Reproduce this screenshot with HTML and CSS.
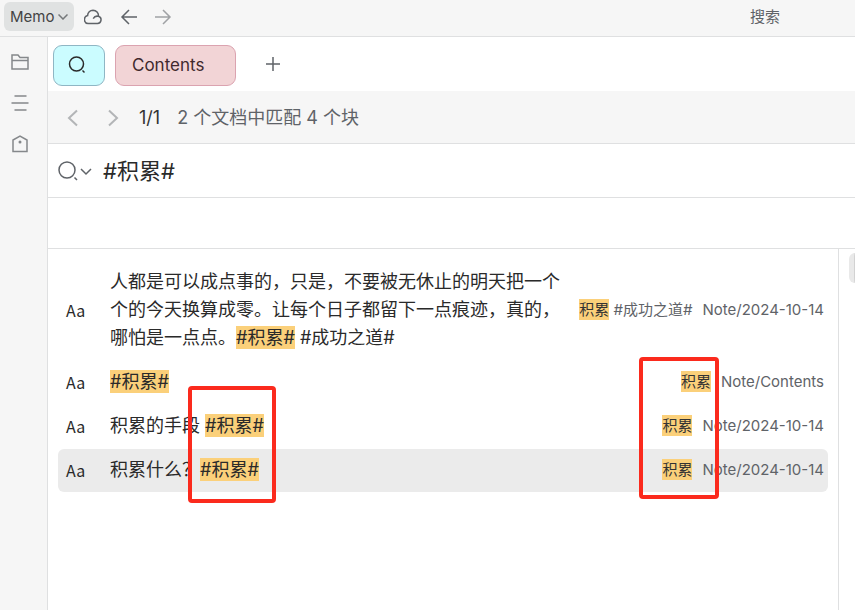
FILE: index.html
```html
<!DOCTYPE html>
<html lang="zh-CN">
<head>
    <meta charset="UTF-8">
    <meta name="viewport" content="width=device-width, initial-scale=1.0">
    <title>搜索</title>
    <link rel="stylesheet" href="styles.css">
</head>
<body>
    <header class="toolbar">
      <button class="workspace" type="button">Memo
        <svg width="10" height="6" viewBox="0 0 10 6"><path d="M.5.5L5 5 9.500.5"/></svg>
      </button>
      <button class="icon_btn cloud" type="button" aria-label="Sync">
        <svg width="18" height="16" viewBox="0 0 18 16"><path d="M4.200 14.500h9.300a3.700 3.700 0 0 0 1-7.200A5.600 5.600 0 0 0 9 1.200 5.500 5.500 0 0 0 3.600 6.600a4 4 0 0 0 .6 7.900z"/><path d="M14.400 7.300c-2-.5-4 .2-5.200 2.300"/></svg>
      </button>
      <button class="icon_btn back" type="button" aria-label="Back">
        <svg width="18" height="16" viewBox="0 0 18 16"><path d="M17 8H2M9 1L2 8l7 7"/></svg>
      </button>
      <button class="icon_btn forward" type="button" aria-label="Forward">
        <svg width="18" height="16" viewBox="0 0 18 16"><path d="M1 8h15M9 1l7 7-7 7"/></svg>
      </button>
      <span class="window_title">搜索</span>
    </header>
    <div class="layout">
      <nav class="dock">
        <button class="icon_btn" type="button" aria-label="Files">
          <svg width="18" height="18" viewBox="0 0 18 18"><path d="M1 16V2h6l2 2.500h8V16zM1 7.500h16"/></svg>
        </button>
        <button class="icon_btn" type="button" aria-label="Outline">
          <svg width="18" height="18" viewBox="0 0 18 18"><path d="M3.500 2h12M.5 9h17M3.500 16h12"/></svg>
        </button>
        <button class="icon_btn" type="button" aria-label="Tags">
          <svg width="18" height="18" viewBox="0 0 18 18"><path d="M2 16.500V5L9 1l7 4v11.500z"/><circle class="dot" cx="9" cy="7" r="1.500"/></svg>
        </button>
      </nav>
      <main class="content">
        <div class="tabs">
          <button class="tab tab_search" type="button" aria-label="搜索">
            <svg width="20" height="20" viewBox="0 0 20 20"><circle cx="9.500" cy="9" r="7"/><path d="M15.500 15.500l2 2"/></svg>
          </button>
          <button class="tab tab_doc" type="button">Contents</button>
          <button class="icon_btn add" type="button" aria-label="New tab">
            <svg width="16" height="16" viewBox="0 0 16 16"><path d="M8 1v14M1 8h14"/></svg>
          </button>
        </div>
        <div class="status">
          <button class="icon_btn pager" type="button" aria-label="Previous">
            <svg width="12" height="18" viewBox="0 0 12 18"><path d="M10 1.500L2 9l8 7.500"/></svg>
          </button>
          <button class="icon_btn pager" type="button" aria-label="Next">
            <svg width="12" height="18" viewBox="0 0 12 18"><path d="M2 1.500L10 9l-8 7.500"/></svg>
          </button>
          <span class="page">1/1</span>
          <span class="count">2 个文档中匹配 4 个块</span>
        </div>
        <div class="search">
          <button class="icon_btn search_menu" type="button" aria-label="History">
            <svg width="34" height="20" viewBox="0 0 34 20"><circle cx="9" cy="9" r="8"/><path d="M16.500 16.500l2.500 2.500M23 8l5 5 5-5"/></svg>
          </button>
          <input class="query" type="text" value="#积累#" aria-label="搜索">
        </div>
        <div class="filters"></div>
        <div class="panes">
          <section class="results">
            <ul class="list">
              <li class="item">
                <span class="type">Aa</span>
                <span class="text">人都是可以成点事的，只是，不要被无休止的明天把一个个的今天换算成零。让每个日子都留下一点痕迹，真的，哪怕是一点点。<mark>#积累#</mark> #成功之道#</span>
                <span class="meta"><span><mark>积累</mark> #成功之道#</span><span>Note/2024-10-14</span></span>
              </li>
              <li class="item">
                <span class="type">Aa</span>
                <span class="text"><mark>#积累#</mark></span>
                <span class="meta"><span><mark>积累</mark></span><span>Note/Contents</span></span>
              </li>
              <li class="item">
                <span class="type">Aa</span>
                <span class="text">积累的手段 <mark>#积累#</mark></span>
                <span class="meta"><span><mark>积累</mark></span><span>Note/2024-10-14</span></span>
              </li>
              <li class="item focus">
                <span class="type">Aa</span>
                <span class="text">积累什么？<mark>#积累#</mark></span>
                <span class="meta"><span><mark>积累</mark></span><span>Note/2024-10-14</span></span>
              </li>
            </ul>
            <div class="frame frame_text"></div>
            <div class="frame frame_tag"></div>
          </section>
          <aside class="preview"><div class="gutter"></div></aside>
        </div>
      </main>
    </div>
</body>
</html>
```
FILE: styles.css
```css
* {
  box-sizing: border-box;
}
body {
  margin: 0;
  min-height: 100vh;
  display: flex;
  flex-direction: column;
  overflow: hidden;
  background-color: #fff;
  color: #2a2a2a;
  font-family: Inter, "Noto Sans CJK SC", sans-serif;
  font-size: 18px;
  line-height: 28px;
}
button,
input {
  font-family: inherit;
  color: inherit;
  border: 0;
  padding: 0;
  background: none;
}
svg {
  display: block;
  fill: none;
  stroke: currentColor;
  stroke-width: 1.5;
}

/* top bar */
.toolbar {
  display: flex;
  align-items: center;
  height: 37px;
  padding: 0 75px 3px 4px;
  background-color: #f6f6f6;
  border-bottom: 1px solid #dfe0e1;
}
.workspace {
  display: flex;
  align-items: center;
  gap: 4px;
  height: 29px;
  padding: 0 6px;
  border-radius: 6px;
  background-color: #e0e2e2;
  color: #444;
  font-size: 15px;
}
.workspace svg {
  color: #75787a;
}
.icon_btn {
  color: #5f6368;
}
.cloud {
  margin-left: 10px;
}
.back {
  margin-left: 18px;
}
.forward {
  margin-left: 16px;
  color: #a0a2a5;
}
.window_title {
  margin-left: auto;
  color: #5f6368;
  font-size: 15px;
}

.layout {
  display: flex;
  flex: 1;
}
.dock {
  display: flex;
  flex-direction: column;
  align-items: center;
  gap: 23px;
  width: 48px;
  padding: 16px 8px 0 0;
  background-color: #f6f6f6;
  border-right: 1px solid #dfe0e1;
}
.dock .icon_btn {
  color: #85888b;
}
.dot {
  fill: currentColor;
  stroke: none;
}
.content {
  display: flex;
  flex-direction: column;
  flex: 1;
  min-width: 0;
}

/* tabs */
.tabs {
  display: flex;
  align-items: center;
  gap: 10px;
  height: 54px;
  padding: 2px 5px 0;
}
.tab {
  height: 41px;
  border: 1px solid;
  border-radius: 9px;
  font-size: 17px;
}
.tab_search {
  width: 52px;
  padding-left: 13px;
  background-color: #cbfcff;
  border-color: #8fb6c4;
}
.tab_doc {
  width: 121px;
  padding-left: 16px;
  background-color: #f2d4d6;
  border-color: #dba3b0;
  color: #40292d;
  text-align: left;
}
.add {
  margin: 0 0 2px 19px;
}

.status {
  display: flex;
  align-items: center;
  height: 53px;
  padding: 1px 0 0 19px;
  background-color: #f6f6f6;
  border-bottom: 1px solid #dfe0e1;
}
.pager {
  margin-right: 28px;
  color: #b3b5b7;
}
.pager svg {
  stroke-width: 2;
}
.pager + .page {
  margin-left: -8px;
}
.page {
  margin-right: 17px;
  color: #333;
}
.count {
  color: #5f6368;
}
.search {
  display: flex;
  align-items: center;
  height: 54px;
  padding-left: 10px;
  border-bottom: 1px solid #dfe0e1;
}
.query {
  flex: 1;
  margin-left: 11px;
  padding-bottom: 3px;
  font-size: 22px;
  outline: none;
}
.filters {
  height: 51px;
  border-bottom: 1px solid #dfe0e1;
}

/* results */
.panes {
  display: flex;
  flex: 1;
}
.results {
  position: relative;
  flex: 1;
  border-right: 1px solid #dfe0e1;
}
.list {
  margin: 0;
  padding: 12px 10px;
  list-style: none;
}
.item {
  display: flex;
  align-items: center;
  margin-bottom: 1px;
  padding: 7px 4px 8px 8px;
  border-radius: 6px;
}
.focus {
  background-color: #ebebeb;
}
.type {
  width: 44px;
  font-family: "Noto Sans CJK SC", sans-serif;
  font-size: 16px;
}
.text {
  flex: 1;
}
.meta {
  display: flex;
  gap: 10px;
  margin-left: 8px;
  color: #5f6368;
  font-size: 15px;
  white-space: nowrap;
}
mark {
  padding: 1px 0;
  background-color: #fbd07a;
  color: inherit;
}
.meta mark {
  color: #333;
}
.frame {
  position: absolute;
  border: 4px solid #fb2a1d;
  border-radius: 4px;
}
.frame_text {
  top: 137px;
  left: 140px;
  width: 88px;
  height: 117px;
}
.frame_tag {
  top: 108px;
  right: 119px;
  width: 80px;
  height: 142px;
}
.preview {
  width: 16px;
  padding: 4px 0 0 10px;
}
.gutter {
  height: 30px;
  border-left: 5px solid #e9e9e9;
  border-radius: 6px 0 0 6px;
  background-color: #d2d2d2;
}
```
